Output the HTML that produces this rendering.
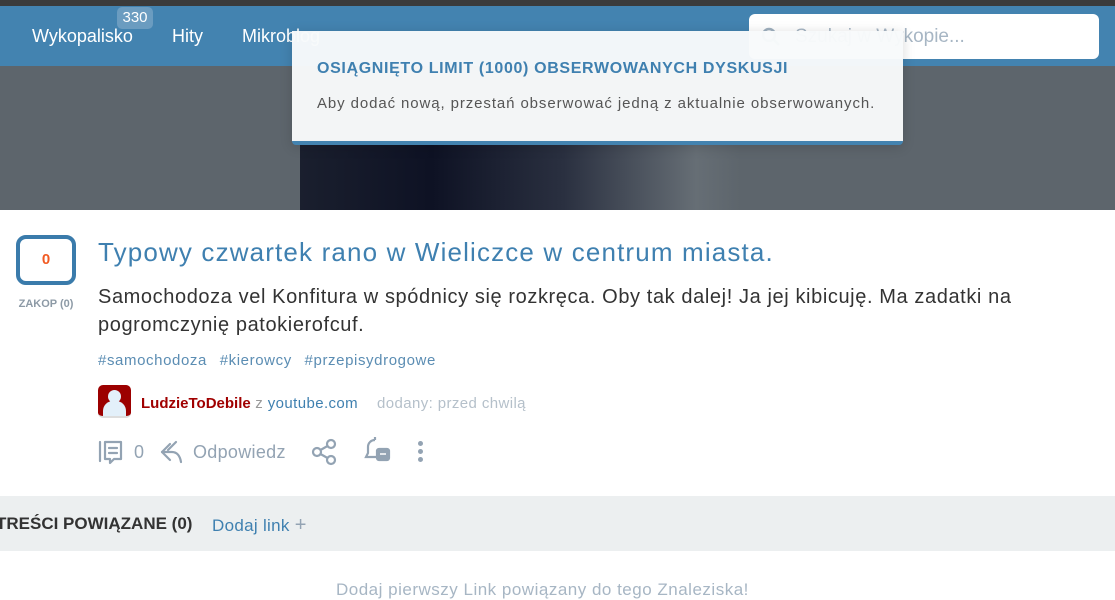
<!DOCTYPE html>
<html><head><meta charset="utf-8"><style>
*{margin:0;padding:0;box-sizing:border-box}
body{width:1115px;height:592px;overflow:hidden;background:#fff;font-family:"Liberation Sans","DejaVu Sans",sans-serif;position:relative}
.a{position:absolute;white-space:nowrap}
</style></head><body>
<div class="a" style="left:0;top:0;width:1115px;height:6px;background:#3b3b3b"></div>
<div class="a" style="left:0;top:6px;width:1115px;height:60px;background:#4383b0"></div>
<div class="a" style="left:32px;top:26px;color:#fff;font-size:18px">Wykopalisko</div>
<div class="a" style="left:117px;top:7px;width:36px;height:22px;background:#6b9cc0;border-radius:5px;color:#fff;font-size:15px;text-align:center;line-height:22px">330</div>
<div class="a" style="left:172px;top:26px;color:#fff;font-size:18px">Hity</div>
<div class="a" style="left:242px;top:26px;color:#fff;font-size:18px">Mikroblog</div>
<div class="a" style="left:749px;top:14px;width:350px;height:45px;background:#fff;border-radius:6px"></div>
<svg class="a" style="left:760px;top:26px" width="22" height="22"><circle cx="9" cy="9" r="6" fill="none" stroke="#9fb0bf" stroke-width="2.5"/><path d="M13 13l6 6" stroke="#9fb0bf" stroke-width="2.5"/></svg>
<div class="a" style="left:795px;top:26px;color:#a7b6c4;font-size:19px">Szukaj w Wykopie...</div>
<div class="a" style="left:0;top:66px;width:1115px;height:144px;background:#5d656c"></div>
<div class="a" style="left:300px;top:140px;width:440px;height:70px;background:linear-gradient(90deg,#1a1f2e,#0e1224 30%,#2a3040 60%,#666e75 90%,#5d656c)"></div>
<div class="a" style="left:292px;top:31px;width:611px;height:114px;background:rgba(248,250,251,.97);border-bottom:4px solid #4383b0;border-radius:0 0 4px 4px;box-shadow:0 2px 12px rgba(0,0,0,.15)"></div>
<div class="a" style="left:317px;top:60px;color:#3f80b0;font-size:16px;font-weight:bold;letter-spacing:.65px">OSIĄGNIĘTO LIMIT (1000) OBSERWOWANYCH DYSKUSJI</div>
<div class="a" style="left:317px;top:95px;color:#555;font-size:15px;letter-spacing:.9px">Aby dodać nową, przestań obserwować jedną z aktualnie obserwowanych.</div>
<div class="a" style="left:16px;top:235px;width:60px;height:50px;border:4px solid #3a7bab;border-radius:10px;color:#f15a22;font-weight:bold;font-size:15px;text-align:center;line-height:42px">0</div>
<div class="a" style="left:15px;top:298px;color:#8d9aa6;font-size:11px;width:62px;text-align:center;font-weight:bold">ZAKOP (0)</div>
<div class="a" style="left:98px;top:237px;color:#3f80b0;font-size:26px;letter-spacing:1.15px">Typowy czwartek rano w Wieliczce w centrum miasta.</div>
<div class="a" style="left:98px;top:283px;color:#333;font-size:20px;line-height:28px;width:1000px;white-space:normal;letter-spacing:.6px">Samochodoza vel Konfitura w spódnicy się rozkręca. Oby tak dalej! Ja jej kibicuję. Ma zadatki na pogromczynię patokierofcuf.</div>
<div class="a" style="left:98px;top:352px;color:#5b8db3;font-size:15px;word-spacing:8px;letter-spacing:.6px">#samochodoza #kierowcy #przepisydrogowe</div>
<div class="a" style="left:98px;top:385px;width:33px;height:33px;background:#9c0000;border-radius:5px;overflow:hidden;border-bottom:2px solid #ddd"><div class="a" style="left:10px;top:5px;width:13px;height:13px;border-radius:50%;background:#e3f0fa"></div><div class="a" style="left:5px;top:16px;width:23px;height:20px;border-radius:10px 10px 0 0;background:#e3f0fa"></div></div>
<div class="a" style="left:141px;top:395px;font-size:15px;color:#999;letter-spacing:.4px"><span style="color:#a00000;font-weight:bold;letter-spacing:0">LudzieToDebile</span> z <span style="color:#3f80b0">youtube.com</span></div>
<div class="a" style="left:377px;top:395px;font-size:15px;color:#b5c0ca;letter-spacing:.4px">dodany: przed chwilą</div>
<svg class="a" style="left:96px;top:438px" width="60" height="30" fill="none" stroke="#93a3b3" stroke-width="2.2" stroke-linecap="round" stroke-linejoin="round">
<path d="M4 4v19"/><path d="M9 4h16v17h-7l-4 4v-4h-5z"/><path d="M13 10h8M13 15h8"/>
</svg>
<svg class="a" style="left:158px;top:438px" width="30" height="30" fill="none" stroke="#93a3b3" stroke-width="2.2" stroke-linecap="round" stroke-linejoin="round">
<path d="M12 6l-8 8 8 8"/><path d="M4 14h10c5 0 8 4 9 10"/><path d="M18 4l-8 8"/>
</svg>
<svg class="a" style="left:310px;top:438px" width="30" height="30" fill="none" stroke="#93a3b3" stroke-width="2.2"><circle cx="7" cy="14" r="4"/><circle cx="21" cy="6" r="4"/><circle cx="21" cy="22" r="4"/><path d="M10.5 12l7-4M10.5 16l7 4"/></svg>
<svg class="a" style="left:363px;top:436px" width="30" height="30" fill="none" stroke="#93a3b3" stroke-width="2.2"><path d="M12 4c-4 0-7 3-7 7v6l-2 4h10"/><path d="M12 1v3"/><rect x="14" y="13" width="12" height="11" rx="2" fill="#93a3b3"/><path d="M17 18h6" stroke="#fff" stroke-width="1.5"/></svg>
<div class="a" style="left:134px;top:442px;color:#93a3b3;font-size:18px">0</div>
<div class="a" style="left:193px;top:442px;color:#93a3b3;font-size:18px;letter-spacing:.3px">Odpowiedz</div>
<div class="a" style="left:418px;top:441px;width:5px;height:5px;border-radius:50%;background:#93a3b3"></div>
<div class="a" style="left:418px;top:449px;width:5px;height:5px;border-radius:50%;background:#93a3b3"></div>
<div class="a" style="left:418px;top:457px;width:5px;height:5px;border-radius:50%;background:#93a3b3"></div>
<div class="a" style="left:0;top:496px;width:1115px;height:55px;background:#eceff0"></div>
<div class="a" style="left:-4px;top:514px;color:#333;font-size:17px;font-weight:bold">TREŚCI POWIĄZANE (0)</div>
<div class="a" style="left:212px;top:514px;color:#3f80b0;font-size:17px;letter-spacing:.3px">Dodaj link <span style="color:#93a3b3;font-size:20px">+</span></div>
<div class="a" style="left:336px;top:580px;color:#a7b6c4;font-size:17px;letter-spacing:.5px">Dodaj pierwszy Link powiązany do tego Znaleziska!</div>
</body></html>
